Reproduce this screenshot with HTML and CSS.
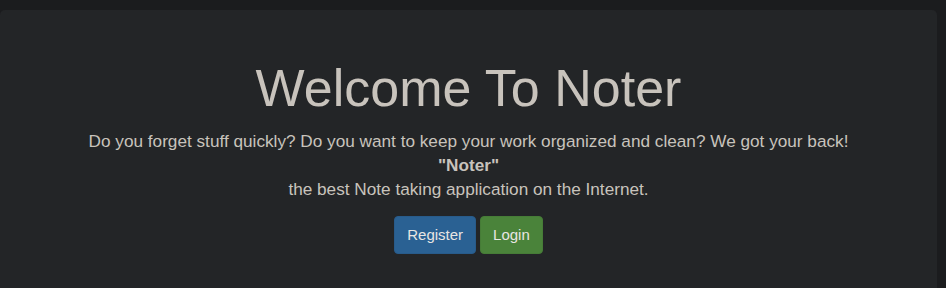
FILE: index.html
```html
<!DOCTYPE html>
<html lang="en">
<head>
    <meta charset="UTF-8">
    <meta name="viewport" content="width=device-width, initial-scale=1.0">
    <title>Noter</title>
    <link rel="stylesheet" href="styles.css">
</head>
<body>
    <div class="jumbotron">
        <h1 class="title">Welcome To Noter</h1>
        <p class="lead">
            Do you forget stuff quickly? Do you want to keep your work organized and clean? We got your back!<br>
            <b>"Noter"</b><br>
            the best Note taking application on the Internet.
        </p>
        <div class="actions">
            <a href="#" class="btn btn-blue">Register</a>
            <a href="#" class="btn btn-green">Login</a>
        </div>
    </div>
</body>
</html>
```

FILE: styles.css
```css
body {
    margin: 0;
    background-color: #1b1c1e;
    font-family: "Liberation Sans", Arial, sans-serif;
    font-size: 16px;
    line-height: 1.5;
    color: #c8c3bc;
    height: 288px;
    overflow: hidden;
}
.jumbotron {
    margin: 10px 9px 0 0;
    padding: 47px 32px 64px;
    background-color: #232527;
    border-radius: 5px;
    text-align: center;
}
.title {
    margin: 0 0 10px;
    font-size: 52px;
    font-weight: 300;
    line-height: 62px;
    color: #c8c3bc;
}
.lead {
    margin: 0 0 15px;
    font-size: 17.2px;
    line-height: 24px;
}
.lead b {
    font-weight: bold;
}
.actions {
    font-size: 0;
}
.btn {
    display: inline-block;
    margin: 0 2px;
    padding: 6px 12px;
    font-size: 15px;
    line-height: 24px;
    color: #e8e6e3;
    text-decoration: none;
    border: 1px solid transparent;
    border-radius: 4px;
}
.btn-blue {
    background-color: #2a6193;
    border-color: #285b8a;
}
.btn-green {
    background-color: #4a833a;
    border-color: #467c37;
}
```
